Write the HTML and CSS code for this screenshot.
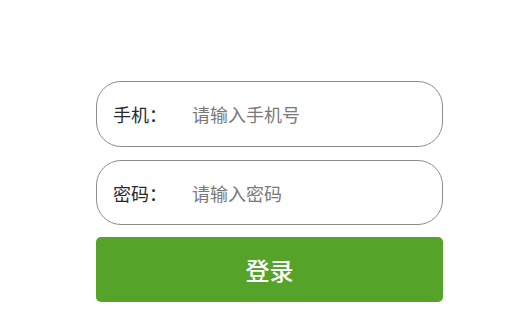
FILE: index.html
```html
<!DOCTYPE html>
<html lang="zh">
<head>
<meta charset="utf-8">
<link rel="stylesheet" href="styles.css">
</head>
<body>
<div class="form">
  <div class="field">
    <span class="label">手机：</span>
    <span class="placeholder">请输入手机号</span>
  </div>
  <div class="field field-2">
    <span class="label">密码：</span>
    <span class="placeholder">请输入密码</span>
  </div>
  <div class="btn">登录</div>
</div>
</body>
</html>
```
FILE: styles.css
```css
html, body {
  margin: 0;
  padding: 0;
  background: #ffffff;
}
body {
  font-family: "Noto Sans CJK SC", "Noto Sans", sans-serif;
}
.form {
  display: flex;
  flex-direction: column;
  width: 347px;
  margin-left: 96px;
  padding-top: 81px;
}
.field {
  box-sizing: border-box;
  height: 66px;
  border: 1px solid #8c8c8c;
  border-radius: 25px;
  display: flex;
  align-items: center;
  padding-left: 16px;
  font-size: 18px;
  line-height: 1;
}
.field-2 {
  height: 65px;
  margin-top: 13px;
}
.label {
  color: #2a2a2a;
  width: 79px;
  flex: none;
}
.placeholder {
  color: #7a7a7a;
}
.btn {
  margin-top: 12px;
  height: 65px;
  border-radius: 5px;
  background: #55a329;
  color: #ffffff;
  font-size: 24px;
  font-weight: 500;
  display: flex;
  align-items: center;
  justify-content: center;
}
```
